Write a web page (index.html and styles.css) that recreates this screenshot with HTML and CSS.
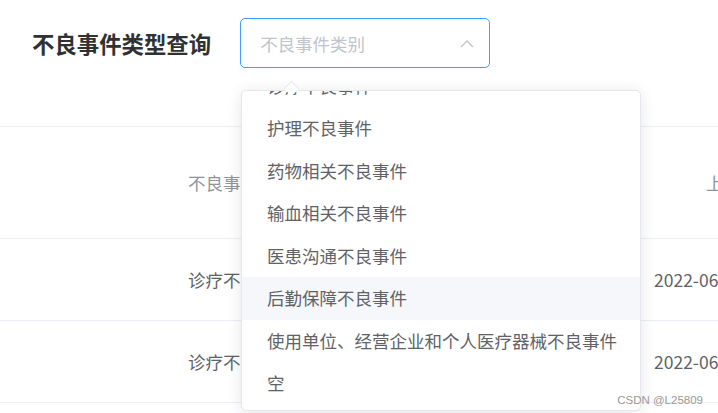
FILE: index.html
```html
<!DOCTYPE html>
<html>
<head>
    <title>不良事件类型查询</title>
    <link rel="stylesheet" href="styles.css">
</head>
<body>

<div class="query-bar">
    <h2 class="query-title">不良事件类型查询</h2>
    <div class="select-box">
        <span class="placeholder">不良事件类别</span>
        <svg class="select-arrow" width="14" height="9" viewBox="0 0 14 9">
            <polyline points="1,8 7,2 13,8" fill="none" stroke="#c0c4cc" stroke-width="1.4"/>
        </svg>
    </div>
</div>

<div class="event-table">
    <div class="cell head first">不良事件类别</div>
    <div class="cell head second">上报时间</div>
    <div class="cell first">诊疗不良事件</div>
    <div class="cell second">2022-06-01 10:12:30</div>
    <div class="cell first">诊疗不良事件</div>
    <div class="cell second">2022-06-01 10:15:42</div>
</div>

<div class="dropdown">
    <div class="dropdown-arrow"></div>
    <ul class="dropdown-list">
        <li>诊疗不良事件</li>
        <li>护理不良事件</li>
        <li>药物相关不良事件</li>
        <li>输血相关不良事件</li>
        <li>医患沟通不良事件</li>
        <li class="hover">后勤保障不良事件</li>
        <li>使用单位、经营企业和个人医疗器械不良事件</li>
        <li>空</li>
    </ul>
</div>

<div class="watermark">CSDN @L25809</div>

</body>
</html>
```

FILE: styles.css
```css
body {
    margin: 0;
    padding: 0;
    font-family: "Noto Sans CJK SC", "Liberation Sans", sans-serif;
    font-size: 17.5px;
    color: #606266;
    background: #fff;
    overflow: hidden;
}
.query-bar {
    display: flex;
    align-items: center;
    height: 126px;
    padding: 0 0 40px 32px;
    box-sizing: border-box;
    gap: 29px;
}
.query-title {
    margin: 0;
    font-size: 22.4px;
    font-weight: bold;
    color: #303133;
}
.select-box {
    width: 250px;
    height: 50px;
    box-sizing: border-box;
    border: 1px solid #409eff;
    border-radius: 5px;
    display: flex;
    align-items: center;
    justify-content: space-between;
    padding: 0 15px 0 19px;
}
.placeholder {
    color: #c0c4cc;
    font-size: 17.5px;
}
.event-table {
    display: grid;
    grid-template-columns: 640px 1fr;
    border-top: 1px solid #ebeef5;
}
.cell {
    height: 81px;
    display: flex;
    align-items: center;
    border-bottom: 1px solid #ebeef5;
    white-space: nowrap;
    overflow: hidden;
}
.cell.head {
    height: 111px;
    color: #909399;
}
.cell.first {
    padding-left: 188px;
}
.cell.second {
    padding-left: 14px;
}
.cell.head.second {
    padding-left: 66px;
}
.dropdown {
    position: absolute;
    left: 241px;
    top: 90px;
    width: 400px;
    height: 321px;
    box-sizing: border-box;
    background: #fff;
    border: 1px solid #e4e7ed;
    border-radius: 5px;
    box-shadow: 0 2px 15px 0 rgba(0, 0, 0, 0.1);
}
.dropdown-arrow {
    position: absolute;
    top: -8px;
    left: 44px;
    width: 10px;
    height: 10px;
    background: #fff;
    border-left: 1px solid #e4e7ed;
    border-top: 1px solid #e4e7ed;
    transform: rotate(45deg);
}
.dropdown-list {
    list-style: none;
    margin: 0;
    padding: 0;
    height: 100%;
    overflow: hidden;
    border-radius: 5px;
}
.dropdown-list li {
    height: 42.5px;
    line-height: 42.5px;
    padding-left: 25px;
    white-space: nowrap;
}
.dropdown-list li:first-child {
    margin-top: -26.5px;
}
.dropdown-list li.hover {
    background: #f5f7fa;
}
.watermark {
    position: absolute;
    right: 15px;
    bottom: 7px;
    font-family: "Liberation Sans", sans-serif;
    font-size: 11.5px;
    color: #999;
}
```
